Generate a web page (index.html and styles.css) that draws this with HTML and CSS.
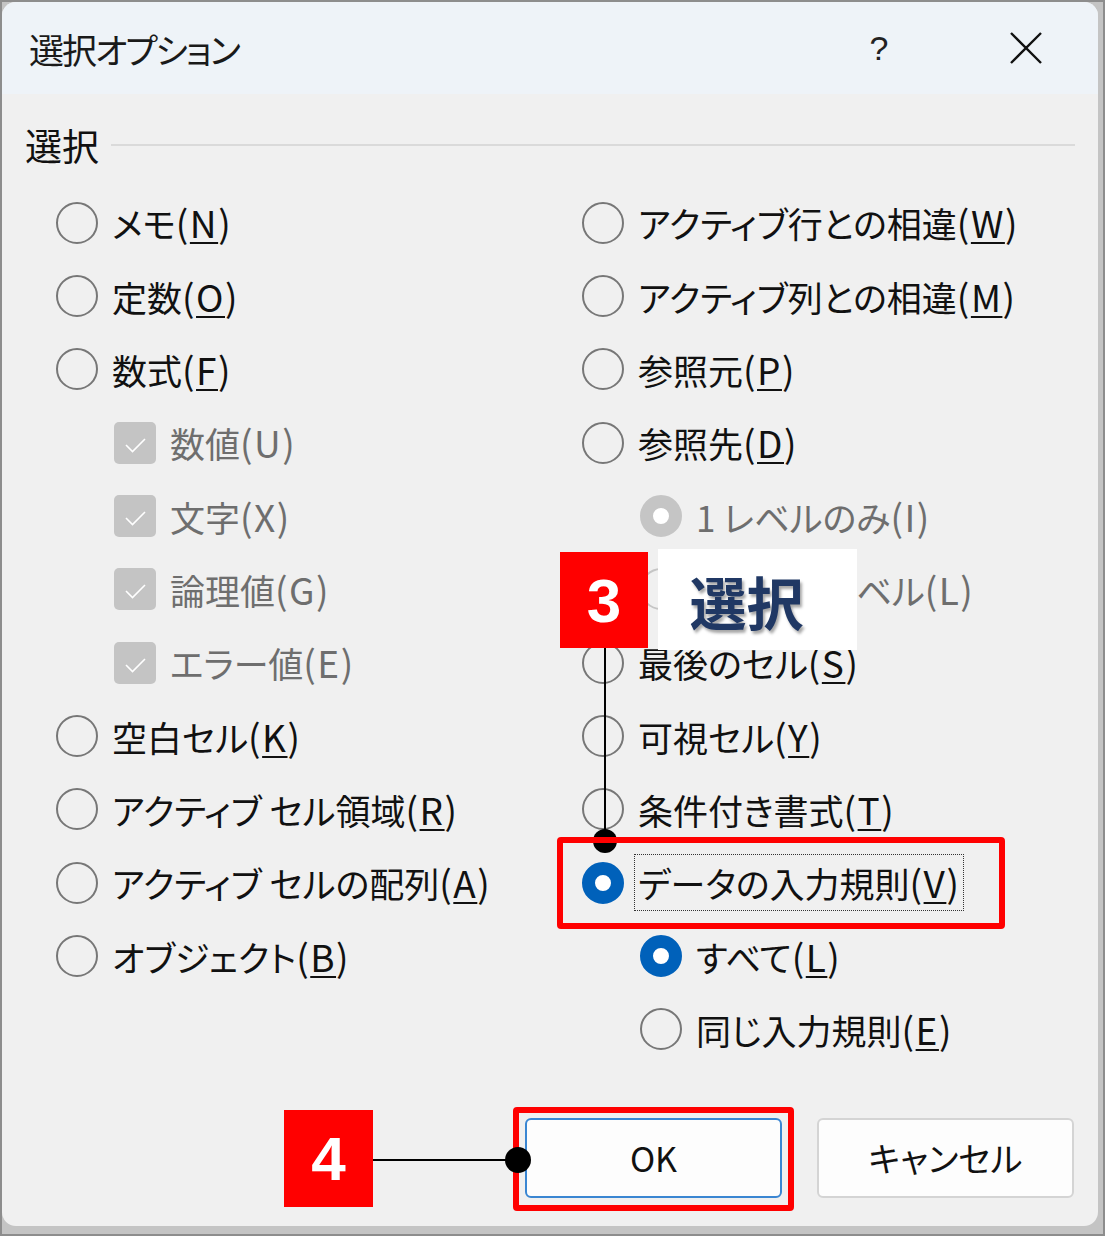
FILE: index.html
```html
<!DOCTYPE html>
<html lang="ja">
<head>
  <meta charset="UTF-8" />
  <title>選択オプション</title>
  <link rel="stylesheet" href="styles.css">
</head>
<body>

  <div class="frame">
    <div class="dialog">
      <div class="titlebar">
        <span class="title">選択オプション</span>
        <span class="help">?</span>
        <span class="close">
          <svg width="32" height="32" viewBox="0 0 32 32"><path d="M1 1 L31 31 M31 1 L1 31" stroke="#111" stroke-width="2.4" fill="none"/></svg>
        </span>
      </div>

      <div class="group-head">
        <span class="group-label">選択</span>
        <span class="rule"></span>
      </div>

      <div class="options">
        <div class="col">
          <div class="opt"><span class="radio"></span><span>メモ<span class="key">(<u>N</u>)</span></span></div>
          <div class="opt"><span class="radio"></span><span>定数<span class="key">(<u>O</u>)</span></span></div>
          <div class="opt"><span class="radio"></span><span>数式<span class="key">(<u>F</u>)</span></span></div>
          <div class="opt sub dim"><span class="check"><svg width="42" height="42" viewBox="0 0 42 42"><polyline points="12,23 18.5,29.5 31,17" stroke="#fff" stroke-width="1.6" fill="none"/></svg></span><span>数値<span class="key">(U)</span></span></div>
          <div class="opt sub dim"><span class="check"><svg width="42" height="42" viewBox="0 0 42 42"><polyline points="12,23 18.5,29.5 31,17" stroke="#fff" stroke-width="1.6" fill="none"/></svg></span><span>文字<span class="key">(X)</span></span></div>
          <div class="opt sub dim"><span class="check"><svg width="42" height="42" viewBox="0 0 42 42"><polyline points="12,23 18.5,29.5 31,17" stroke="#fff" stroke-width="1.6" fill="none"/></svg></span><span>論理値<span class="key">(G)</span></span></div>
          <div class="opt sub dim"><span class="check"><svg width="42" height="42" viewBox="0 0 42 42"><polyline points="12,23 18.5,29.5 31,17" stroke="#fff" stroke-width="1.6" fill="none"/></svg></span><span>エラー値<span class="key">(E)</span></span></div>
          <div class="opt"><span class="radio"></span><span>空白セル<span class="key">(<u>K</u>)</span></span></div>
          <div class="opt"><span class="radio"></span><span>アクティブ セル領域<span class="key">(<u>R</u>)</span></span></div>
          <div class="opt"><span class="radio"></span><span>アクティブ セルの配列<span class="key">(<u>A</u>)</span></span></div>
          <div class="opt"><span class="radio"></span><span>オブジェクト<span class="key">(<u>B</u>)</span></span></div>
        </div>
        <div class="col">
          <div class="opt"><span class="radio"></span><span>アクティブ行との相違<span class="key">(<u>W</u>)</span></span></div>
          <div class="opt"><span class="radio"></span><span>アクティブ列との相違<span class="key">(<u>M</u>)</span></span></div>
          <div class="opt"><span class="radio"></span><span>参照元<span class="key">(<u>P</u>)</span></span></div>
          <div class="opt"><span class="radio"></span><span>参照先<span class="key">(<u>D</u>)</span></span></div>
          <div class="opt sub dim"><span class="radio dim-on"></span><span>1 レベルのみ<span class="key">(I)</span></span></div>
          <div class="opt sub dim"><span class="radio dim-off"></span><span>すべてのレベル<span class="key">(L)</span></span></div>
          <div class="opt"><span class="radio"></span><span>最後のセル<span class="key">(<u>S</u>)</span></span></div>
          <div class="opt"><span class="radio"></span><span>可視セル<span class="key">(<u>Y</u>)</span></span></div>
          <div class="opt"><span class="radio"></span><span>条件付き書式<span class="key">(<u>T</u>)</span></span></div>
          <div class="opt"><span class="radio on"></span><span class="focus">データの入力規則<span class="key">(<u>V</u>)</span></span></div>
          <div class="opt sub"><span class="radio on"></span><span>すべて<span class="key">(<u>L</u>)</span></span></div>
          <div class="opt sub"><span class="radio"></span><span>同じ入力規則<span class="key">(<u>E</u>)</span></span></div>
        </div>
      </div>

      <div class="footer">
        <button class="btn primary">OK</button>
        <button class="btn">キャンセル</button>
      </div>
    </div>

    <!-- callouts -->
    <div class="badge badge-3">3</div>
    <div class="callout-label">選択</div>
    <div class="leader leader-3"></div>
    <div class="dot dot-3"></div>
    <div class="hl hl-valid"></div>

    <div class="badge badge-4">4</div>
    <div class="leader leader-4"></div>
    <div class="hl hl-ok"></div>
    <div class="dot dot-4"></div>
  </div>

</body>
</html>
```

FILE: styles.css
```css
body {
  margin: 0;
  background: #fff;
  font-family: "Noto Sans CJK JP", "Noto Sans", sans-serif;
}

.frame {
  position: relative;
  width: 1105px;
  height: 1236px;
  box-sizing: border-box;
  border: 2px solid #8d8d8d;
  padding: 0 5px 8px 0;
  background: #c4c4c4;
}

.dialog {
  height: 100%;
  background: #f0f0f0;
  border-radius: 14px;
  overflow: hidden;
}

.titlebar {
  height: 92px;
  background: #eef3f8;
  display: flex;
  align-items: center;
  padding: 0 42px 0 27px;
}

.title {
  font-size: 35px;
  font-feature-settings: "palt";
  color: #1a1a1a;
  letter-spacing: -2px;
}

.help {
  margin-left: auto;
  width: 60px;
  text-align: center;
  font-family: "Liberation Sans", sans-serif;
  font-size: 34px;
  color: #222;
}

.close {
  width: 60px;
  margin-left: 87px;
  display: flex;
  justify-content: center;
}

.group-head {
  display: flex;
  align-items: center;
  gap: 12px;
  height: 40px;
  margin-top: 31px;
  padding: 0 23px 0 23px;
}

.group-label {
  font-size: 37px;
  color: #111;
}

.rule {
  flex: 1;
  height: 2px;
  background: #dadada;
}

.options {
  display: grid;
  grid-template-columns: 526px 1fr;
  margin-top: 21px;
  padding-left: 54px;
}

.col {
  display: grid;
  grid-auto-rows: 73.33px;
}

.opt {
  display: flex;
  align-items: center;
  gap: 14px;
  font-size: 35px;
  line-height: 1.2;
  color: #111;
  font-feature-settings: "palt";
  white-space: nowrap;
}

.opt .key {
  font-size: 37px;
  letter-spacing: 1.5px;
}

.opt u {
  text-decoration-thickness: 2px;
  text-underline-offset: 4px;
}

.opt.sub {
  padding-left: 58px;
}

.opt.dim {
  color: #6e6e6e;
}

.radio {
  flex: none;
  width: 42px;
  height: 42px;
  box-sizing: border-box;
  border: 2px solid #777;
  border-radius: 50%;
}

.radio.on {
  border: 13px solid #0061ba;
  background: #fff;
}

.radio.dim-on {
  border: 13px solid #c5c5c5;
  background: #fff;
}

.radio.dim-off {
  border-color: #c5c5c5;
}

.check {
  flex: none;
  width: 42px;
  height: 42px;
  border-radius: 5px;
  background: #c4c4c4;
}

.focus {
  padding: 5px 3px;
  margin-left: -4px;
  border: 1px dotted #333;
}

.footer {
  display: flex;
  justify-content: flex-end;
  gap: 35px;
  margin-top: 52px;
  padding-right: 24px;
}

.btn {
  width: 257px;
  height: 80px;
  box-sizing: border-box;
  border: 2px solid #d4d4d4;
  border-radius: 6px;
  background: #fdfdfd;
  font-family: "Noto Sans CJK JP", sans-serif;
  font-feature-settings: "palt";
  font-size: 34px;
  color: #111;
}

.btn.primary {
  border-color: #3a86d2;
}

/* callouts */
.badge {
  position: absolute;
  background: #ff0000;
  color: #fff;
  font-family: "Liberation Sans", sans-serif;
  font-weight: bold;
  font-size: 62px;
  display: flex;
  align-items: center;
  justify-content: center;
}

.badge-3 { left: 558px; top: 550px; width: 88px; height: 96px; }
.badge-4 { left: 282px; top: 1108px; width: 89px; height: 97px; }

.callout-label {
  position: absolute;
  left: 656px;
  top: 547px;
  width: 199px;
  height: 101px;
  box-sizing: border-box;
  padding-right: 22px;
  background: #fff;
  display: flex;
  align-items: center;
  justify-content: center;
  font-size: 57px;
  font-weight: bold;
  color: #203864;
  text-shadow: 2px 3px 3px rgba(0, 0, 0, 0.35);
}

.leader {
  position: absolute;
  background: #000;
}

.leader-3 { left: 602px; top: 646px; width: 2px; height: 193px; }
.leader-4 { left: 371px; top: 1157px; width: 144px; height: 2px; }

.dot {
  position: absolute;
  width: 24px;
  height: 24px;
  border-radius: 50%;
  background: #000;
}

.dot-3 { left: 591px; top: 827px; }
.dot-4 { left: 503px; top: 1145px; width: 26px; height: 26px; }

.hl {
  position: absolute;
  box-sizing: border-box;
  border: 6px solid #ff0000;
  border-radius: 4px;
}

.hl-valid { left: 555px; top: 835px; width: 448px; height: 92px; }
.hl-ok { left: 511px; top: 1105px; width: 281px; height: 104px; }
```
